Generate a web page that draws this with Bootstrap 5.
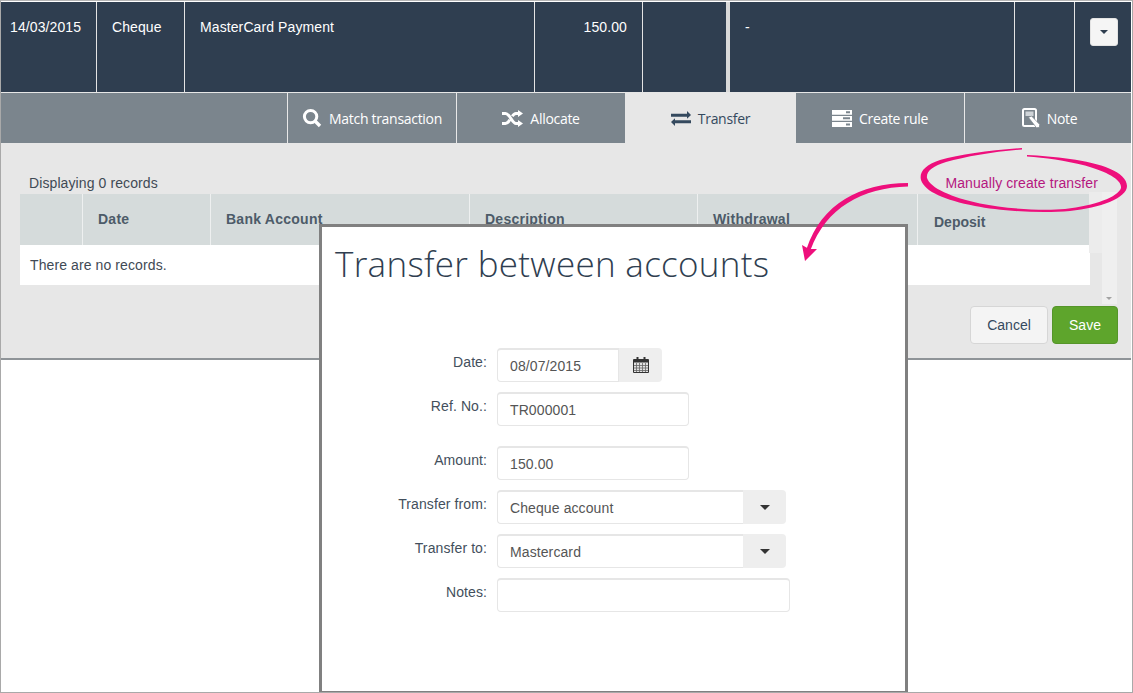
<!DOCTYPE html>
<html lang="en">
<head>
<meta charset="utf-8">
<title>Transfer between accounts</title>
<link rel="stylesheet" href="https://cdn.jsdelivr.net/npm/bootstrap@5.3.0/dist/css/bootstrap.min.css">
<style>
html,body{height:100%;margin:0;background:#fff}
body{font-family:"Liberation Sans",Arial,sans-serif;font-size:14px;letter-spacing:.1px;color:#3a4652;overflow:hidden}
.frame{position:relative;width:1133px;height:693px;border:1px solid #a9a9a9;border-top-color:#b5b5b5;overflow:hidden;background:#fff}
.stmt-row{height:91px;margin-top:1px;background:#2f3e50;color:#fff;border-bottom:1px solid #e7e7e7;margin-right:1px}
.stmt-cell{padding:15px 15px 0;line-height:20px;border-right:1px solid #e4e4e4;flex:none}
.w-date{width:96px;padding-left:9px}.w-type{width:88px}.w-desc{width:350px}.w-amt{width:108px;text-align:right}.w-blank{width:87px;border-right-width:4px;border-right-color:#d9d9d9}
.w-dash{width:285px}.w-gap{width:60px}.w-act{flex:1;border-right:0;padding:16px 13px 0 15px;text-align:right}
.caret-btn{width:28px;height:28px;padding:0;background:#f5f5f5;border:1px solid #e3e3e3;border-radius:3px;display:inline-flex;align-items:center;justify-content:center}
.caret-btn i{border:4px solid transparent;border-top-color:#2f3e50;border-bottom:0;display:block}
.tab-bar{height:50px;background:#7b858d;margin-right:1px}
.tab-spacer{width:286px;flex:none}
.tab-item{flex:none;height:100%;display:flex;align-items:center;justify-content:center;gap:7px;color:#fff;border-left:1px solid #e8e8e8;font-family:"Open Sans","Noto Sans",sans-serif;font-size:14px;letter-spacing:-.3px}
.tab-match{width:169px}.tab-alloc{width:169px}.tab-transfer{width:171px;background:#e7e7e7;color:#34495e;border-left:0}.tab-rule{width:168px;border-left:0}.tab-note{flex:1;padding-left:3px}
.panel{height:217px;background:#e7e7e7;border-bottom:2px solid #8f9498;position:relative;margin-right:1px}
.rec-line{height:51px;padding:25px 19px 0 28px;line-height:30px;color:#3f4a55}
.manual-link{padding-right:14px;color:#b5177f;text-decoration:none}
.data-head{width:1069px;margin-left:19px;height:51px;background:#d5dbdb;font-weight:700;letter-spacing:.25px;color:#4d5b69}
.h-cell{padding:0 15px;line-height:50px;border-right:1px solid #eef0f0;flex:none}
.h-check{width:63px}.h-date{width:128px}.h-bank{width:259px}.h-desc{width:228px}.h-with{width:220px}.h-dep{flex:1;border-right:0;line-height:56px;padding-left:16px;letter-spacing:0}
.data-empty{width:1070px;margin-left:19px;height:40px;background:#fff;padding-left:10px;line-height:40px;color:#3f4a55}
.scroll-gutter{position:absolute;left:1088px;top:49px;width:13px;height:61px;background:#ececec}
.scroll-track{position:absolute;left:1101px;top:49px;width:15px;height:112px;background:#efefef}
.scroll-track::after{content:"";position:absolute;left:4px;bottom:4px;border:3.5px solid transparent;border-top-color:#a3a3a3;border-bottom:0}
.actions{position:absolute;right:13px;top:163px;gap:4px}
.btn-cancel{width:78px;height:38px;background:#f4f4f4;border:1px solid #d6d6d6;color:#34495e;font-size:14px;padding:0;border-radius:4px}
.btn-save{width:66px;height:38px;background:#5ea52c;border:1px solid #55952a;color:#fff;font-size:14px;padding:0;border-radius:4px}
.dialog{position:absolute;left:318px;top:223px;width:589px;height:469px;background:#fff;border:3px solid #808080;border-bottom-width:2px;z-index:2}
.dialog-title{font-family:"Open Sans","Noto Sans",sans-serif;font-weight:300;font-size:35px;line-height:44px;color:#2f3e50;margin:15px 0 0 13px;letter-spacing:.3px}
.form-area{margin-top:62px}
.f-row{display:flex;height:34px;margin-bottom:10px}
.f-row.gap-after{margin-bottom:20px}
.f-label{width:165px;flex:none;text-align:right;line-height:16px;padding-top:6px;color:#434f5c;margin:0}
.f-field{margin-left:10px;flex:none}
.box{height:34px;padding:0 12px;line-height:33px;font-size:14px;color:#555;border:1px solid #e6e6e6;border-top-width:2px;border-radius:4px;background:#fff;box-shadow:none}
.w-192{width:192px}.w-293{width:293px}
.date-group{width:165px}.date-group .box{width:122px;flex:none}
.addon{background:#eee;border:0;padding:0 0 0 2px;justify-content:center;border-radius:0 4px 4px 0}
.date-group .addon{width:44px}
.sel-group{width:289px}.sel-group .box{width:246px;flex:none;border-right:0}
.sel-group .addon{width:44px}
.sel-caret{border:5px solid transparent;border-top-color:#333;border-bottom:0;display:block;border-left-width:5.5px;border-right-width:5.5px}
.notes{height:34px}
.scribble{position:absolute;left:-1px;top:-1px;z-index:3;pointer-events:none}
</style>
</head>
<body>
<div class="frame">
  <div class="stmt-row d-flex">
    <div class="stmt-cell w-date">14/03/2015</div>
    <div class="stmt-cell w-type">Cheque</div>
    <div class="stmt-cell w-desc">MasterCard Payment</div>
    <div class="stmt-cell w-amt">150.00</div>
    <div class="stmt-cell w-blank"></div>
    <div class="stmt-cell w-dash">-</div>
    <div class="stmt-cell w-gap"></div>
    <div class="stmt-cell w-act"><button type="button" class="caret-btn" aria-label="More"><i></i></button></div>
  </div>
  <div class="tab-bar d-flex">
    <div class="tab-spacer"></div>
    <div class="tab-item tab-match">
      <svg width="20" height="20" viewBox="0 0 20 20" fill="none" stroke="#fff"><circle cx="8.600" cy="8.600" r="6.200" stroke-width="3"/><path d="M13 13l5 5" stroke-width="3.400"/></svg>
      <span>Match transaction</span>
    </div>
    <div class="tab-item tab-alloc">
      <svg width="21" height="17" viewBox="0 0 21 17"><path d="M0 3.500h3.500c4.500 0 6.500 10 10.500 10h3M0 13.500h3.500c2 0 3.200-1.800 4.300-3.800M10.300 6.300c1-1.600 2-2.800 3.700-2.800h3" fill="none" stroke="#fff" stroke-width="3"/><path d="M16 0l5 3.500L16 7zM16 10l5 3.500L16 17z" fill="#fff"/></svg>
      <span>Allocate</span>
    </div>
    <div class="tab-item tab-transfer">
      <svg width="20" height="15" viewBox="0 0 20 15" fill="#34495e"><path d="M0 2.700h16V0l4 3.900L16 7.700V5.700H0zM20 9.300H4V7.200L0 11l4 4v-2.700h16z"/></svg>
      <span>Transfer</span>
    </div>
    <div class="tab-item tab-rule">
      <svg width="20" height="17" viewBox="0 0 20 17" fill="#fff"><path d="M0 0h20v4.800H0zM0 6h20v4.800H0zM0 12.100h20V17H0z"/><path d="M14 1.300h4v2h-4zM11 7.300h7v2h-7zM14 13.400h4v2h-4z" fill="#7b858d"/></svg>
      <span>Create rule</span>
    </div>
    <div class="tab-item tab-note">
      <svg width="18" height="20" viewBox="0 0 18 20" fill="none"><rect x="1" y="1" width="13" height="17" rx="1.500" stroke="#fff" stroke-width="2"/><rect x="3.500" y="3.500" width="8" height="4.500" fill="#cfd4d8"/><path d="M6.500 9.500l3-1.500 8 8.300v3l-3 .5z" fill="#fff" stroke="#7b858d" stroke-width=".7"/></svg>
      <span>Note</span>
    </div>
  </div>
  <div class="panel">
    <div class="rec-line d-flex justify-content-between">
      <span>Displaying 0 records</span>
      <a class="manual-link" href="#">Manually create transfer</a>
    </div>
    <div class="data-head d-flex">
      <div class="h-cell h-check"></div>
      <div class="h-cell h-date">Date</div>
      <div class="h-cell h-bank">Bank Account</div>
      <div class="h-cell h-desc">Description</div>
      <div class="h-cell h-with">Withdrawal</div>
      <div class="h-cell h-dep">Deposit</div>
    </div>
    <div class="data-empty">There are no records.</div>
    <div class="scroll-gutter"></div>
    <div class="scroll-track"></div>
    <div class="actions d-flex">
      <button type="button" class="btn btn-cancel">Cancel</button>
      <button type="button" class="btn btn-save">Save</button>
    </div>
  </div>

  <div class="dialog">
    <h1 class="dialog-title">Transfer between accounts</h1>
    <div class="form-area">
      <div class="f-row">
        <label class="f-label">Date:</label>
        <div class="f-field input-group date-group flex-nowrap">
          <div class="form-control box">08/07/2015</div>
          <span class="input-group-text addon">
            <svg width="16" height="16" viewBox="0 0 16 16"><path d="M.5 2.500h15v13H.5z" fill="#e2e2e2" stroke="#333"/><path d="M1 2.500h14V5.500H1zM3.500 0h2v4h-2zM10.500 0h2v4h-2z" fill="#333"/><path d="M1 8.500h14M1 11h14M1 13.500h14M3.500 6v9M6.500 6v9M9.500 6v9M12.500 6v9" stroke="#666" stroke-width=".8" fill="none"/></svg>
          </span>
        </div>
      </div>
      <div class="f-row gap-after">
        <label class="f-label">Ref. No.:</label>
        <div class="f-field form-control box w-192">TR000001</div>
      </div>
      <div class="f-row">
        <label class="f-label">Amount:</label>
        <div class="f-field form-control box w-192">150.00</div>
      </div>
      <div class="f-row">
        <label class="f-label">Transfer from:</label>
        <div class="f-field input-group sel-group flex-nowrap">
          <div class="form-control box">Cheque account</div>
          <span class="input-group-text addon"><i class="sel-caret"></i></span>
        </div>
      </div>
      <div class="f-row">
        <label class="f-label">Transfer to:</label>
        <div class="f-field input-group sel-group flex-nowrap">
          <div class="form-control box">Mastercard</div>
          <span class="input-group-text addon"><i class="sel-caret"></i></span>
        </div>
      </div>
      <div class="f-row">
        <label class="f-label">Notes:</label>
        <div class="f-field form-control box notes w-293"></div>
      </div>
    </div>
  </div>

  <svg class="scribble" width="1133" height="693" viewBox="0 0 1133 693" aria-hidden="true">
    <path fill="#ee0f7c" d="M1022 148C990 150 960 154.500 940 160C925 165 919 172 921 180C925 192 945 200 975 206C1000 211 1040 213.500 1070 211C1100 208 1127 198 1127 186C1127 172 1100 163 1070 159C1055 157 1040 155.500 1027 155L1027 156.500C1045 157.500 1065 160.500 1085 165.500C1108 172 1122 180 1121 188C1118 197 1095 205.500 1065 209C1040 211 1005 208.500 980 203.500C952 197.500 930 188 927 178C926 171 933 166 946 162C966 156.500 995 151.500 1022 149.500Z"/>
    <path fill="#ee0f7c" d="M908 183C860 183.500 822 203 806.500 249L810.500 250C826 208 862 187.500 908 186.500Z"/>
    <path fill="#ee0f7c" d="M802 245L805 261L817 249L809 249Z"/>
  </svg>
</div>
<script src="https://cdn.jsdelivr.net/npm/bootstrap@5.3.0/dist/js/bootstrap.bundle.min.js"></script>
</body>
</html>
